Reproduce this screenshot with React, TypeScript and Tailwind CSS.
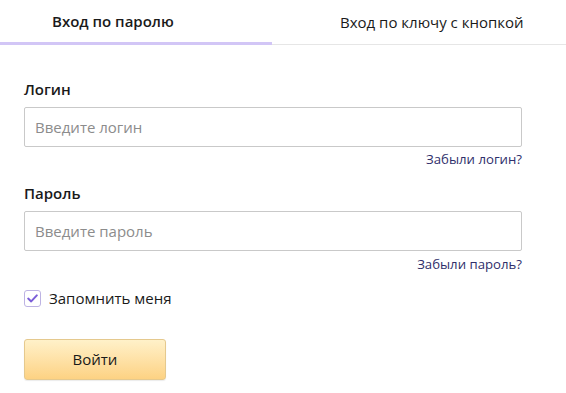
import React, { useState } from "react";

const App = () => {
  const [tab, setTab] = useState(0);
  const [remember, setRemember] = useState(true);

  return (
    <div
      className="w-[566px] h-[393px] bg-white text-[#1a1a1a] overflow-hidden"
      style={{ fontFamily: '"Open Sans", "Noto Sans", sans-serif' }}
    >
      {/* Tabs */}
      <div className="flex h-[45px]">
        <button
          onClick={() => setTab(0)}
          className={`w-[272px] h-full pl-[52px] text-left text-[15px] border-b-[3px] ${
            tab === 0 ? "border-[#d2c6f6] font-semibold" : "border-[#e6e6e6]"
          }`}
        >
          Вход по паролю
        </button>
        <button
          onClick={() => setTab(1)}
          className={`flex-1 h-full pl-[68px] text-left text-[15px] ${
            tab === 1
              ? "border-b-[3px] border-[#d2c6f6] font-semibold"
              : "border-b border-[#e6e6e6]"
          }`}
        >
          Вход по ключу с кнопкой
        </button>
      </div>

      {/* Form */}
      <div className="w-[498px] ml-[24px] pt-[34px] flex flex-col">
        <label className="text-[15px] font-semibold leading-5">Логин</label>
        <input
          placeholder="Введите логин"
          className="mt-[8px] h-[40px] border border-[#c9c9c9] rounded-[2px] px-[10px] text-[15px] placeholder-[#8c8c8c] outline-none"
        />
        <a className="self-end mt-[2px] text-[13.2px] leading-5 text-[#2f2f6b] cursor-pointer">
          Забыли логин?
        </a>

        <label className="mt-[14px] text-[15px] font-semibold leading-5">Пароль</label>
        <input
          type="password"
          placeholder="Введите пароль"
          className="mt-[8px] h-[40px] border border-[#c9c9c9] rounded-[2px] px-[10px] text-[15px] placeholder-[#8c8c8c] outline-none"
        />
        <a className="self-end mt-[3px] text-[13.2px] leading-5 text-[#2f2f6b] cursor-pointer">
          Забыли пароль?
        </a>

        <label
          className="mt-[14px] h-[20px] flex items-center gap-[8px] cursor-pointer select-none"
          onClick={() => setRemember(!remember)}
        >
          <span className="w-[17px] h-[17px] border border-[#bdb3e3] rounded-[3px] flex items-center justify-center bg-white">
            {remember && (
              <svg width="11" height="9" viewBox="0 0 11 9">
                <path
                  d="M1.2 4.6 L4.2 7.4 L9.8 1.4"
                  fill="none"
                  stroke="#7b5ed8"
                  strokeWidth="2"
                  strokeLinecap="round"
                  strokeLinejoin="round"
                />
              </svg>
            )}
          </span>
          <span className="text-[15px] leading-5">Запомнить меня</span>
        </label>

        <button className="mt-[31px] w-[142px] h-[41px] rounded-[3px] border border-[#e5c98e] bg-gradient-to-b from-[#fff1c9] to-[#fdd283] text-[15px] shadow-[0_1px_1px_rgba(0,0,0,0.08)]">
          Войти
        </button>
      </div>
    </div>
  );
};

export default App;
